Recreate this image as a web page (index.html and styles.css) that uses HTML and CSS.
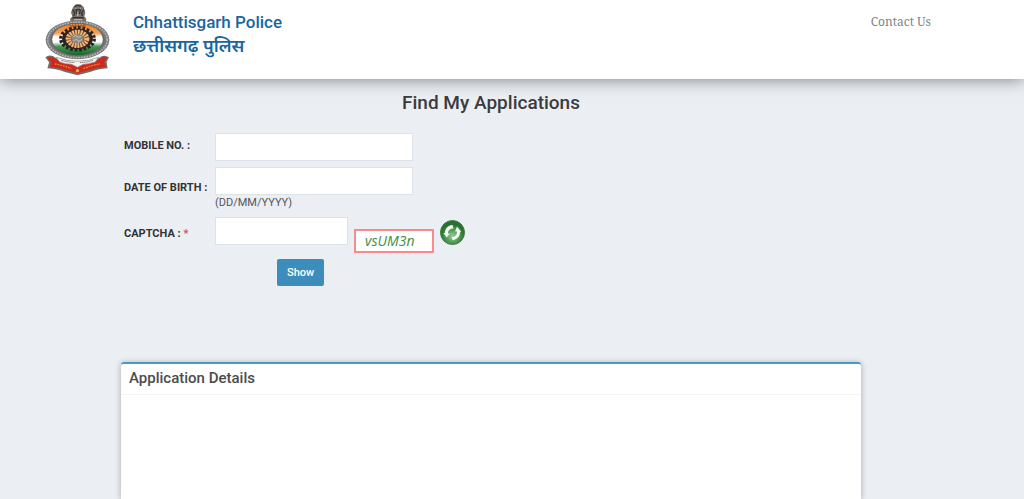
FILE: index.html
```html
<!DOCTYPE html>
<html lang="en">
<head>
<meta charset="utf-8">
<title>Find My Applications</title>
<link rel="stylesheet" href="styles.css">
</head>
<body>
<header class="header">
  <div class="brand">
    <svg class="emblem" viewBox="47 8 190 218" preserveAspectRatio="none" role="img" aria-label="Chhattisgarh Police emblem">
      <defs>
        <linearGradient id="flag" x1="0" y1="0" x2="0" y2="1">
          <stop offset="0" stop-color="#ee7a1c"/><stop offset=".3" stop-color="#f6a055"/>
          <stop offset=".42" stop-color="#fff"/><stop offset=".58" stop-color="#fff"/>
          <stop offset=".72" stop-color="#4c9654"/><stop offset="1" stop-color="#12682c"/>
        </linearGradient>
      </defs>
      <path d="M124 70l-4-14 7-8-4-12 6-16 8-8h14l9 8 5 16-3 12 6 8-4 14z" fill="#77706a"/>
      <path d="M134 19q9-8 18 0M128 28l6 10-3 9M160 28l-6 10 3 9M138 28h12l-2 11h-8zM127 52h34" fill="none" stroke="#393431" stroke-width="4"/>
      <path d="M136 24h3M149 24h3M143 34v13M132 58h24" stroke="#d4cbc2" stroke-width="3"/>
      <ellipse cx="142" cy="118" rx="93" ry="58" fill="#777879"/>
      <ellipse cx="142" cy="118" rx="87" ry="53" fill="none" stroke="#b4b4b4" stroke-width="5" stroke-dasharray="5 3"/>
      <ellipse cx="142" cy="118" rx="79" ry="48" fill="#68696a"/>
      <ellipse cx="142" cy="117" rx="74" ry="47" fill="url(#flag)"/>
      <path d="M121 68h42l3 10h-48z" fill="#a75722"/>
      <path d="M122 73h40" stroke="#f0b068" stroke-width="3" stroke-dasharray="5 3"/>
      <ellipse cx="142" cy="115" rx="49" ry="33" fill="none" stroke="#292424" stroke-width="10" stroke-dasharray="8 5"/>
      <ellipse cx="142" cy="115" rx="45" ry="31" fill="#2d2420"/>
      <ellipse cx="142" cy="115" rx="35" ry="26" fill="#7b5437"/>
      <ellipse cx="142" cy="115" rx="27" ry="20" fill="none" stroke="#efb478" stroke-width="15" stroke-dasharray="5 3"/>
      <ellipse cx="142" cy="115" rx="18" ry="13" fill="#8a8984"/>
      <path d="M129 111l7-6 9 5 9-3M130 121l9-5 6 7 9-6" fill="none" stroke="#beb9aa" stroke-width="3"/>
      <path d="M48 170q14-11 31 2q64 24 126 0q14-12 29-2l-7 14 3 19q-29 2-49 10l-39 11-39-11q-18-8-49-10l5-18z" fill="#776b68"/>
      <path d="M53 172q13-7 25 3q63 28 128 0q12-9 23-3l-9 12 4 15q-26 1-46 9l-36 10-35-10q-20-8-46-9l5-15z" fill="#cf281d"/>
      <path d="M79 170q64 24 125 0l-10 14q-23 7-35 7l-17 9-18-9q-18 0-34-7z" fill="#f4f3f0" stroke="#8d8783" stroke-width="2"/>
      <path d="M95 179q18 6 38 7M149 186q21-1 38-7" fill="none" stroke="#77716b" stroke-width="3" stroke-dasharray="4 2"/>
      <path d="M76 190q24 4 48 14M160 204q22-10 48-14" fill="none" stroke="#df8e2b" stroke-width="4" stroke-dasharray="5 3"/>
      <circle cx="142" cy="210" r="5" fill="#e9a943"/>
    </svg>
    <div class="brand-name"><span>Chhattisgarh Police</span><span class="brand-hindi" lang="hi">छत्तीसगढ़ पुलिस</span></div>
  </div>
  <a class="contact" href="#">Contact Us</a>
</header>
<main class="main">
  <h1 class="title">Find My Applications</h1>
  <form class="form">
    <label class="label label-mobile" for="mobile">MOBILE NO. :</label>
    <input class="input" id="mobile" type="text">
    <label class="label label-dob" for="dob">DATE OF BIRTH :</label>
    <div class="field">
      <input class="input" id="dob" type="text" aria-describedby="dob-hint">
      <span class="hint" id="dob-hint">(DD/MM/YYYY)</span>
    </div>
    <label class="label label-captcha" for="captcha">CAPTCHA : <span class="required">*</span></label>
    <div class="captcha-row">
      <input class="input input-short" id="captcha" type="text" required>
      <span class="captcha">vsUM3n</span>
      <button class="refresh" type="button" aria-label="Refresh captcha">
        <svg viewBox="0 0 50 50" aria-hidden="true">
          <defs><radialGradient id="ball" cy=".65"><stop offset="0" stop-color="#98cc9b"/><stop offset=".5" stop-color="#54a05a"/><stop offset="1" stop-color="#28712e"/></radialGradient></defs>
          <circle cx="25" cy="25" r="24" fill="url(#ball)" stroke="#43784a" stroke-width="2"/>
          <path d="M25 10L27 17C20 17 16 21 16 27L20 27 13 35 7 26 10 26C10 17 16 11 25 10z" fill="#f4faf2"/>
          <path d="M25 40L23 34C30 34 34 30 34 23L30 23 34 13 42 23 40 25C40 33 34 39 25 40z" fill="#f4faf2"/>
        </svg>
      </button>
    </div>
    <button class="show" type="submit">Show</button>
  </form>
  <section class="panel">
    <h2 class="panel-title">Application Details</h2>
    <div class="panel-body"></div>
  </section>
</main>
</body>
</html>
```
FILE: styles.css
```css
* { box-sizing: border-box; }
html { height: 100%; }
body {
  display: flex;
  flex-direction: column;
  height: 100%;
  margin: 0;
  overflow: hidden;
  background: #ebeff4;
  color: #333;
  font: 12px/16px Roboto, sans-serif;
}
.header {
  display: flex;
  justify-content: space-between;
  align-items: flex-start;
  padding: 3px 93px 3px 45px;
  background: #fff;
  box-shadow: 0 0 16px rgba(0, 0, 0, .5);
}
.brand { display: flex; gap: 23px; }
.emblem { display: block; width: 65px; height: 73px; }
.brand-name {
  display: flex;
  flex-direction: column;
  padding-top: 7px;
  color: #1766a0;
  font: 500 17px/24px Roboto, "Noto Sans", "Noto Sans Devanagari", sans-serif;
}
.brand-hindi { font-size: 18px; font-weight: 600; }
.contact {
  padding-top: 9px;
  color: #7d8588;
  font: 12px/20px "Noto Serif", "Liberation Serif", serif;
  text-decoration: none;
}
.main {
  display: flex;
  flex: 1;
  flex-direction: column;
  padding: 12px 163px 0 121px;
}
.title {
  margin: 0;
  color: #3b3b3b;
  font-size: 19px;
  font-weight: 500;
  line-height: 24px;
  text-align: center;
}
.form {
  display: grid;
  grid-template-columns: 91px 1fr;
  row-gap: 6px;
  padding: 18px 3px 0;
}
.label { font-size: 11px; font-weight: 700; white-space: nowrap; }
.label-mobile { padding-top: 5px; }
.label-dob { padding-top: 13px; }
.label-captcha { padding-top: 9px; }
.required { color: #dd4b39; }
.input {
  width: 198px;
  height: 28px;
  padding: 4px 8px;
  border: 1px solid #dde1e8;
  background: #fff;
  font: inherit;
}
.input-short { width: 133px; }
.field { display: flex; flex-direction: column; }
.hint { color: #555; font-size: 11px; }
.captcha-row { display: flex; align-items: flex-start; gap: 6px; }
.captcha {
  width: 80px;
  margin-top: 12px;
  padding-left: 9px;
  border: 2px solid #f88b90;
  background: #fff;
  color: #3c913e;
  font: italic 14px/20px "Open Sans", sans-serif;
}
.refresh {
  width: 25px;
  height: 25px;
  margin-top: 3px;
  padding: 0;
  border: 0;
  background: none;
}
.refresh svg { display: block; }
.show {
  grid-column: 2;
  justify-self: start;
  height: 27px;
  margin: 0 0 0 62px;
  padding: 0 10px;
  border: 0;
  border-radius: 2px;
  background: #3c8dbc;
  color: #fff;
  font: 500 11px/16px Roboto, sans-serif;
}
.panel {
  flex: 1;
  margin-top: 76px;
  border-top: 2px solid #4c99c8;
  border-radius: 3px 3px 0 0;
  background: #fff;
  box-shadow: 0 1px 6px rgba(0, 0, 0, .3);
}
.panel-title {
  margin: 0;
  padding: 4px 8px 6px;
  border-bottom: 1px solid #f4f4f4;
  color: #4c4c4c;
  font-size: 15px;
  font-weight: 500;
  line-height: 20px;
}
```
